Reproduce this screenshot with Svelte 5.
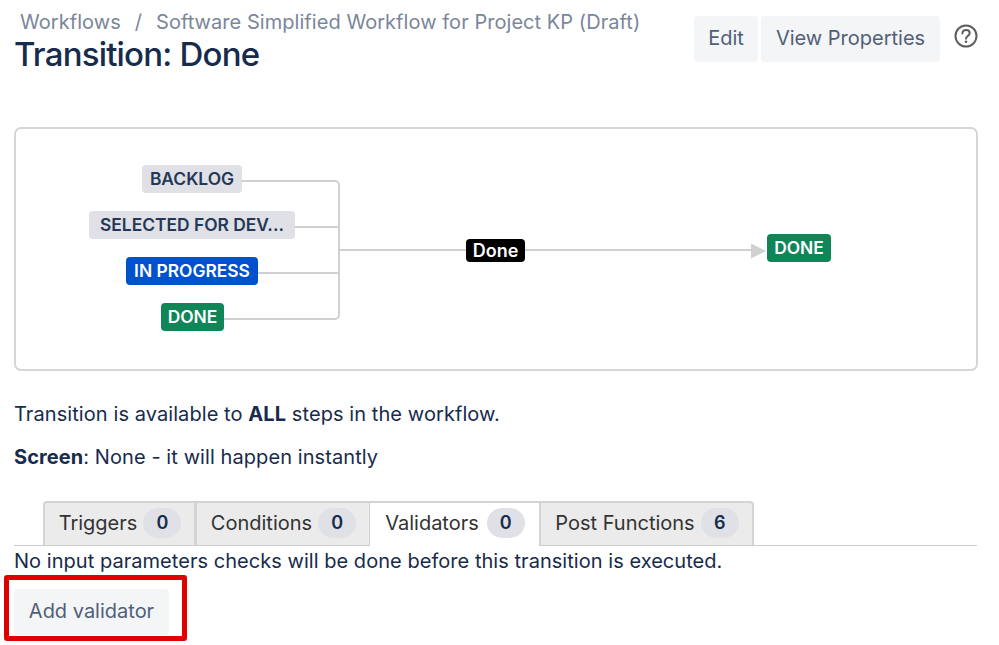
<script>
  const statuses = [
    { label: 'BACKLOG', kind: 'grey', left: 142, top: 165, width: 100 },
    { label: 'SELECTED FOR DEV...', kind: 'grey', left: 89, top: 211, width: 206 },
    { label: 'IN PROGRESS', kind: 'blue', left: 126, top: 257, width: 132 },
    { label: 'DONE', kind: 'green', left: 161, top: 303, width: 63 }
  ];
  const tabs = [
    { label: 'Triggers', count: 0, width: 152 },
    { label: 'Conditions', count: 0, width: 175 },
    { label: 'Validators', count: 0, width: 169, active: true },
    { label: 'Post Functions', count: 6, width: 215 }
  ];
</script>

<div class="page">
  <header class="head">
    <div class="titles">
      <nav class="crumbs"><span>Workflows</span><span class="sep">/</span><span>Software Simplified Workflow for Project KP (Draft)</span></nav>
      <h1>Transition: Done</h1>
    </div>
    <div class="actions">
      <button class="btn edit">Edit</button>
      <button class="btn props">View Properties</button>
      <svg class="help" width="26" height="26" viewBox="0 0 26 26" fill="none" stroke="#5e5e5e" stroke-width="2">
        <circle cx="13" cy="13" r="10.5" />
        <path d="M9.4 10.6c0-2.2 1.6-3.5 3.7-3.5s3.6 1.3 3.6 3.1c0 2.7-3.7 2.6-3.7 5.5" stroke-linecap="round" />
        <circle cx="13" cy="18.8" r="1.3" fill="#5e5e5e" stroke="none" />
      </svg>
    </div>
  </header>

  <section class="diagram">
    <svg class="lines" width="964" height="244" viewBox="14 127 964 244" fill="none" stroke="#cfd0d2" stroke-width="2">
      <path d="M242 181H335a4 4 0 0 1 4 4V315a4 4 0 0 1-4 4H224" />
      <path d="M295 227H339M258 273H339M339 250H752" />
      <path d="M751 243.5L766 251L751 258.5Z" fill="#cfd0d2" stroke="none" />
    </svg>
    {#each statuses as s}
      <span class="lozenge {s.kind}" style="left:{s.left - 14}px;top:{s.top - 127}px;width:{s.width}px">{s.label}</span>
    {/each}
    <span class="transition">Done</span>
    <span class="lozenge green target">DONE</span>
  </section>

  <p class="first">Transition is available to <b>ALL</b> steps in the workflow.</p>
  <p class="second"><b>Screen</b>: None - it will happen instantly</p>

  <div class="tabs">
    {#each tabs as t}
      <div class="tab" class:active={t.active} style="width:{t.width}px">
        {t.label}<span class="count">{t.count}</span>
      </div>
    {/each}
  </div>
  <p class="note">No input parameters checks will be done before this transition is executed.</p>

  <div class="add">
    <button class="btn addbtn">Add validator</button>
    <div class="mark"></div>
  </div>
</div>

<style>
  :global(body) {
    margin: 0;
    background: #fff;
  }
  .page {
    width: 964px;
    height: 645px;
    padding-left: 14px;
    overflow: hidden;
    font-family: Inter, "Liberation Sans", sans-serif;
    font-size: 20px;
    color: #172b4d;
    box-sizing: content-box;
  }
  .head {
    display: flex;
    justify-content: space-between;
    height: 127px;
  }
  .crumbs {
    display: flex;
    gap: 14px;
    padding: 10px 0 0 6px;
    font-size: 20px;
    line-height: 24px;
    letter-spacing: 0.05px;
    color: #7a869a;
  }
  h1 {
    margin: 0;
    font-size: 33px;
    line-height: 40px;
    font-weight: 500;
    letter-spacing: -0.8px;
    color: #172b4d;
  }
  .actions {
    display: flex;
    gap: 3px;
    align-items: flex-start;
    padding-top: 16px;
  }
  .btn {
    height: 46px;
    border: 0;
    border-radius: 4px;
    background: #f4f5f7;
    color: #505f79;
    font: inherit;
    padding: 0 0 2px;
  }
  .edit { width: 64px; }
  .props { width: 179px; }
  .help {
    margin: 7px -1px 0 10px;
  }
  .diagram {
    position: relative;
    height: 244px;
    box-sizing: border-box;
    border: 2px solid #d5d6d8;
    border-radius: 7px;
  }
  .lines {
    position: absolute;
    left: -2px;
    top: -2px;
  }
  .lozenge {
    position: absolute;
    margin: -2px 0 0 -2px;
    height: 28px;
    line-height: 28px;
    border-radius: 4px;
    text-align: center;
    font-size: 17.4px;
    font-weight: 600;
  }
  .grey { background: #dfe1e6; color: #253858; }
  .blue { background: #0052cc; color: #fff; }
  .green { background: #0f8558; color: #fff; }
  .target {
    left: 753px;
    top: 107px;
    width: 64px;
  }
  .transition {
    position: absolute;
    left: 450px;
    top: 110px;
    width: 59px;
    height: 23px;
    line-height: 23px;
    border-radius: 4px;
    background: #000;
    color: #fff;
    text-align: center;
    font-size: 18px;
    font-weight: 600;
  }
  p {
    margin: 0;
    line-height: 24px;
    letter-spacing: 0.08px;
  }
  b { font-weight: 700; }
  .first { margin-top: 31px; }
  .second { margin-top: 19px; }
  .tabs {
    display: flex;
    height: 44px;
    margin: 32px 1px 0 0;
    padding-left: 29px;
    border-bottom: 1px solid #ccc;
  }
  .tab {
    display: flex;
    align-items: center;
    justify-content: center;
    gap: 6px;
    box-sizing: border-box;
    height: 44px;
    padding: 0 0 2px 1px;
    background: #ebebeb;
    border: 2px solid #d4d4d4;
    border-right-width: 1px;
    border-bottom: 0;
    color: #333;
  }
  .tab:first-child { border-radius: 4px 0 0 0; }
  .tab:last-child { border-radius: 0 4px 0 0; border-right-width: 2px; }
  .tab.active {
    height: 45px;
    gap: 8px;
    padding: 0 0 3px 1px;
    background: #fff;
    border-width: 2px 0 0;
  }
  .count {
    width: 38px;
    height: 30px;
    line-height: 30px;
    border-radius: 15px;
    background: #dfe1e6;
    color: #172b4d;
    text-align: center;
    font-size: 18px;
    font-weight: 600;
  }
  .note { margin-top: 3px; letter-spacing: 0.04px; }
  .add {
    position: relative;
    margin-top: 16px;
    width: 155px;
  }
  .addbtn { width: 155px; display: block; }
  .mark {
    position: absolute;
    left: -10px;
    top: -14px;
    width: 183px;
    height: 66px;
    box-sizing: border-box;
    border: 5px solid #e00000;
    border-radius: 3px;
  }
</style>
